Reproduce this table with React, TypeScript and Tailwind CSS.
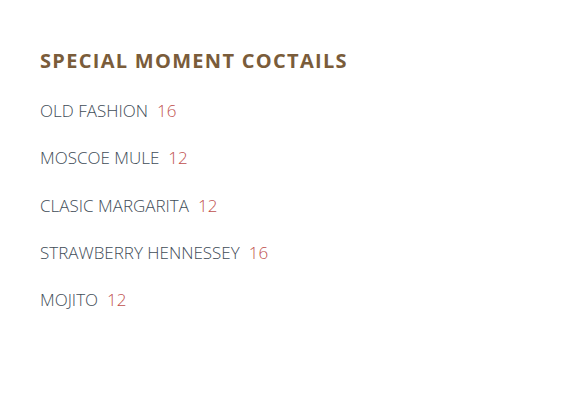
export default function App() {
  const items = [
    { name: "OLD FASHION", price: "16" },
    { name: "MOSCOE MULE", price: "12" },
    { name: "CLASIC MARGARITA", price: "12" },
    { name: "STRAWBERRY HENNESSEY", price: "16" },
    { name: "MOJITO", price: "12" },
  ];

  return (
    <div className="min-h-[400px] w-[574px] bg-white px-10 pt-[47px] font-['Open_Sans',sans-serif]">
      <h2 className="text-[20px] font-bold tracking-[1.3px] text-[#7a5c3a] leading-[28px]">
        SPECIAL MOMENT COCTAILS
      </h2>
      <ul className="mt-[24px] flex flex-col gap-[23.25px]">
        {items.map((item) => (
          <li key={item.name} className="text-[17px] leading-[24px] font-[350] text-[#3f4d58]">
            {item.name}
            <span className="ml-[9px] text-[#c0504d]">{item.price}</span>
          </li>
        ))}
      </ul>
    </div>
  );
}
